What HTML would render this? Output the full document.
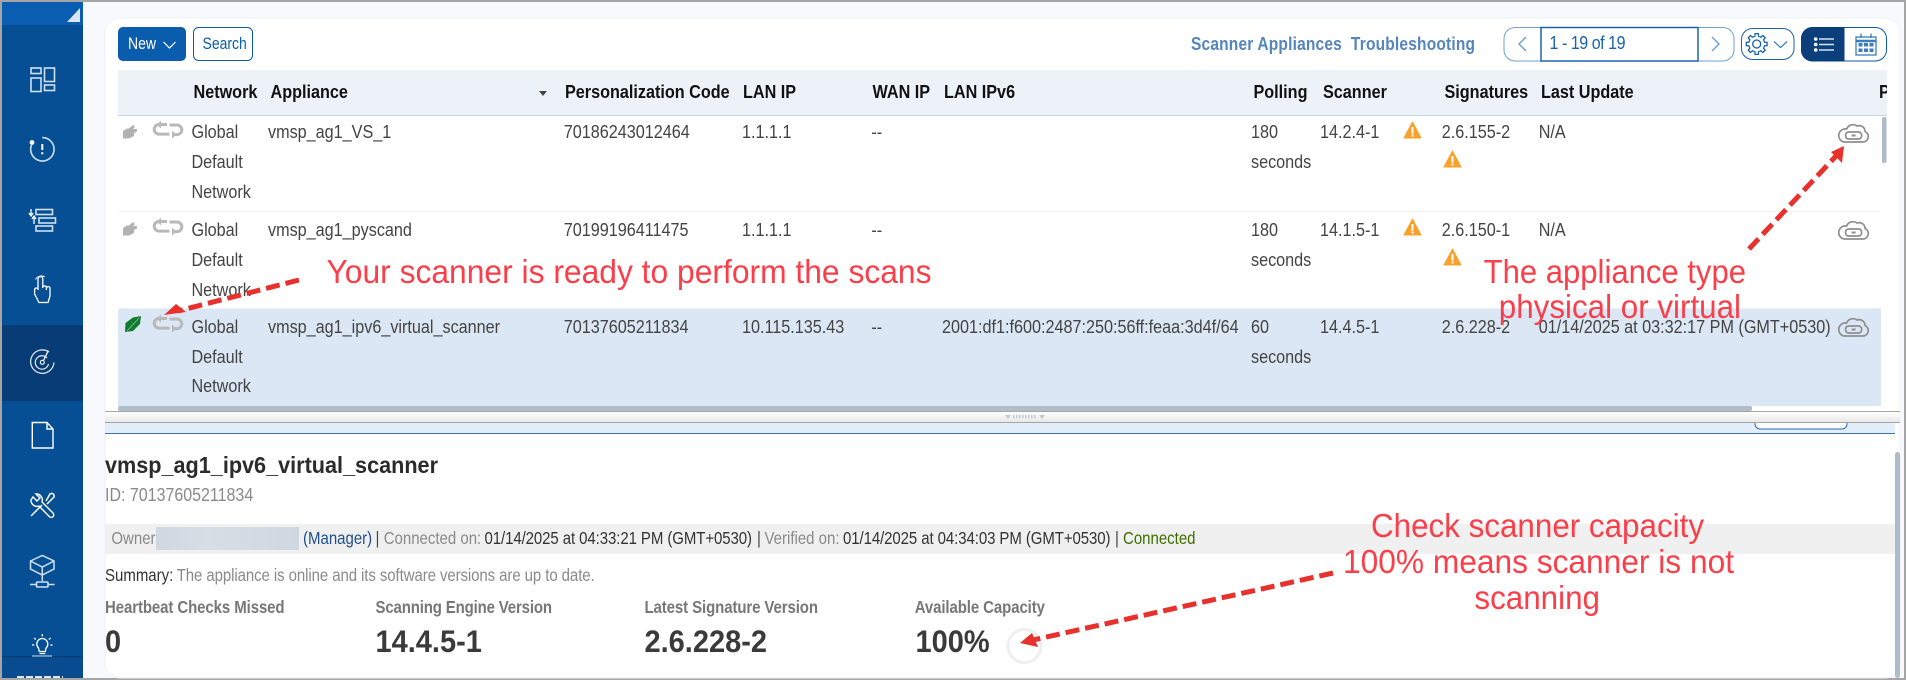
<!DOCTYPE html>
<html>
<head>
<meta charset="utf-8">
<title>Scanner Appliances</title>
<style>
html,body{margin:0;padding:0;background:#fff;width:1906px;height:680px;overflow:hidden}
svg{display:block;position:absolute;left:0;top:0}
text{font-family:"Liberation Sans",Arial,sans-serif;white-space:pre}
</style>
</head>
<body>
<svg width="1906" height="680" viewBox="0 0 1906 680" xmlns="http://www.w3.org/2000/svg">
<defs>
<linearGradient id="spl" x1="0" y1="0" x2="0" y2="1"><stop offset="0" stop-color="#fff"/><stop offset="1" stop-color="#e8e8e8"/></linearGradient>
<linearGradient id="blur" x1="0" y1="0" x2="1" y2="0"><stop offset="0" stop-color="#cfd7e1"/><stop offset=".35" stop-color="#d8dee6"/><stop offset="1" stop-color="#cfd7e1"/></linearGradient>
<clipPath id="hdrclip"><rect x="118" y="70" width="1769" height="46"/></clipPath>
<clipPath id="sideclip"><rect x="2" y="2" width="81" height="654"/></clipPath>
<g id="plug"><path d="M-7 6.5 V-1 L-3 -3.5 L-1 -3.5 L3 -7 L5 -5 L3 -3 L7 -3 L7 -0.5 L4 1 V4 L-1 6.5 Z" fill="#b2b2b2"/></g>
<g id="link" fill="none" stroke="#b9b9b9" stroke-width="3"><path d="M-1 -5.500 H-9 a4.800 4.800 0 0 0 0 9.600 H1.500"/><path d="M1.500 -5 H9 a4.800 4.800 0 0 1 0 9.600 H4"/><path d="M-7 -9.500 V-1.500 L-11 -5.500 Z" fill="#b9b9b9" stroke="none"/><path d="M4 0.500 V8.500 L8.500 4.600 Z" fill="#b9b9b9" stroke="none"/></g>
<g id="warn"><path d="M0 -8 L8.5 8 H-8.5 Z" fill="#f8a22e" stroke="#f8a22e" stroke-width="1" stroke-linejoin="round"/><rect x="-1" y="-3" width="2" height="6.5" fill="#fff"/><rect x="-1" y="4.5" width="2" height="2" fill="#fff"/></g>
<g id="cloud" fill="none" stroke="#8f8f8f" stroke-width="1.700"><path d="M-9 9 H9 a5.500 5.500 0 0 0 2.500 -10.500 a6 6 0 0 0 -8 -5.500 a7 7 0 0 0 -10.500 3 a6.500 6.500 0 0 0 -2.500 13 Z"/><rect x="-8" y="-1" width="16" height="7" rx="3"/><rect x="-2" y="1.500" width="4" height="2" fill="#8f8f8f" stroke="none"/></g>
<path id="tooth" d="M-3.06 -7.39 L-1.8 -7.8 L-1.64 -10.37 L1.64 -10.37 L1.8 -7.8 L3.06 -7.39" fill="none" stroke="#1a62ae" stroke-width="1.3"/>
</defs>

<!-- frame -->
<rect width="1906" height="680" fill="#a5a5a5"/>
<rect x="2" y="2" width="1902" height="676" fill="#f7f9fd"/>

<!-- sidebar -->
<rect x="2" y="2" width="81" height="676" fill="#064f95"/>
<rect x="2" y="2" width="81" height="23" fill="#0a5db0"/>
<path d="M67 22 L80 8 V22 Z" fill="#dbe6f3"/>
<rect x="2" y="325" width="81" height="76" fill="#073c76"/>
<rect x="2" y="656" width="81" height="22" fill="#084b8f"/>
<rect x="2" y="656" width="81" height="1" fill="#063a72"/>
<path d="M17 677 H63" stroke="#dfe7f0" stroke-width="2" stroke-dasharray="7 2"/>
<g fill="none" stroke="#cfe0f1" stroke-width="1.6" clip-path="url(#sideclip)">
  <rect x="31" y="68" width="10" height="5.5"/><rect x="31" y="78" width="10" height="13.5"/><rect x="44.5" y="68" width="10" height="13.5"/><rect x="44.5" y="85" width="10" height="5.5"/>
  <path d="M42.3 137.6 A11.7 11.7 0 1 1 31.5 145"/><circle cx="32" cy="142.5" r="2.4" fill="#fff" stroke="none"/><path d="M42.3 144 V150" stroke="#fff" stroke-width="2"/><circle cx="42.3" cy="153.3" r="1.2" fill="#fff" stroke="none"/>
  <rect x="36" y="209.5" width="16.5" height="5"/><rect x="39" y="218" width="16.5" height="5"/><rect x="36" y="226" width="16.5" height="5"/>
  <path d="M31 209 V215 M29 213 L31 216 L33 213 M34 224 V217 M32 219 L34 216 L36 219" stroke-width="1.3" stroke="#fff"/>
  <path d="M38 290 V279 a2.4 2.4 0 0 1 4.8 0 V288 M42.8 287 a2 2 0 0 1 3.6 0 V290 M46.4 288 a1.8 1.8 0 0 1 3.6 0.6 V296 l-2 6.5 H39 L34.6 294 V289.5 a1.8 1.8 0 0 1 3.4 -0.5" stroke="#fff" stroke-width="1.3"/>
  <path d="M35.5 279.5 a6.7 6.7 0 0 1 9.5 -2.5" stroke="#e6eff8" stroke-width="1"/>
  <path d="M49 352 A11.7 11.7 0 1 0 54 362.5 M47 358 A6.7 6.7 0 1 0 48.5 364" stroke="#e8f0f8" stroke-width="1.2"/><circle cx="42.3" cy="362.3" r="2" stroke="#fff" stroke-width="1.1"/><path d="M43.5 360.5 L48.3 350.7" stroke="#fff" stroke-width="1.2"/>
  <path d="M32.3 422.5 H47 L53 429 V448 H32.3 Z M47 422.5 V429 H53" stroke="#fff" stroke-width="1.4"/>
  <path d="M33 497 L37 501 L40 498 L36 494 a6 6 0 0 1 6 8 L53 513 a2.3 2.3 0 0 1 -3.6 3.6 L39 506 a6 6 0 0 1 -8 -6 Z" stroke="#fff" stroke-width="1.4"/>
  <path d="M31 516 L42 505 M46 501 L50 494 a2.6 2.6 0 0 1 4 3 L47 504" stroke="#fff" stroke-width="1.5"/>
  <path d="M30.5 561 L42.3 555.500 L54 561 V569 L42.3 575 L30.5 569 Z M30.5 561 L42.3 567 L54 561 M42.3 567 V581" stroke-width="1.5"/>
  <rect x="36.5" y="582" width="11.5" height="5" rx="1"/><path d="M30 584.5 H36.5 M48 584.5 H54.5"/>
  <path d="M38.5 648 a5.5 5.5 0 1 1 7.6 0 l-.8 3.5 H39.3 Z M39.5 653.5 H45.3" stroke="#fff" stroke-width="1.3"/>
  <path d="M42.3 634 V636.5 M34 638 L35.8 639.5 M50.6 638 L48.8 639.5 M32 645 H34.3 M50.3 645 H52.6" stroke="#fff" stroke-width="1.2"/>
  <path d="M32 665 V657 H52 V665" stroke="#fff"/>
</g>
<path d="M32 656 H52" stroke="#cfe0f1" stroke-width="1"/>

<!-- card -->
<rect x="105" y="18" width="1795" height="660" rx="15" fill="#fff" stroke="#eef1f5" stroke-width="1"/>

<!-- toolbar -->
<rect x="118" y="27" width="68" height="34" rx="5" fill="#0a5cad"/>
<text transform="matrix(1 0 0 1.18 128 49)" font-size="14" fill="#fff">New</text>
<path d="M163.500 42 L169.500 48 L175.500 42" fill="none" stroke="#fff" stroke-width="1.2"/>
<rect x="193.5" y="27.5" width="59" height="33" rx="5" fill="#fff" stroke="#0a5cad"/>
<text transform="matrix(1 0 0 1.18 202.500 49)" font-size="14" fill="#0a5cad">Search</text>
<text transform="matrix(1 0 0 1.18 1191 50)" font-size="15.5" font-weight="bold" fill="#5585bd" textLength="284" lengthAdjust="spacing">Scanner Appliances  Troubleshooting</text>

<path d="M1541 27.5 H1515 a11 11 0 0 0 -11 11 V50 a11 11 0 0 0 11 11 H1541" fill="#fff" stroke="#6fa0cf"/>
<path d="M1698 27.5 H1723 a11 11 0 0 1 11 11 V50 a11 11 0 0 1 -11 11 H1698" fill="#fff" stroke="#6fa0cf"/>
<rect x="1541" y="27.5" width="157" height="33.500" fill="#fff" stroke="#0a5cad" stroke-width="1.4"/>
<path d="M1526 37 L1519 44 L1526 51" fill="none" stroke="#6f9fcc" stroke-width="1.4"/>
<path d="M1712 37 L1719 44 L1712 51" fill="none" stroke="#6f9fcc" stroke-width="1.4"/>
<text transform="matrix(1 0 0 1.15 1549.500 49)" font-size="16" fill="#1a62ae" textLength="76">1 - 19 of 19</text>

<rect x="1741.500" y="28.5" width="52.500" height="31" rx="11" fill="#fff" stroke="#1a62ae"/>
<g transform="translate(1756.7 44)">
  <use href="#tooth"/><use href="#tooth" transform="rotate(45)"/><use href="#tooth" transform="rotate(90)"/><use href="#tooth" transform="rotate(135)"/><use href="#tooth" transform="rotate(180)"/><use href="#tooth" transform="rotate(225)"/><use href="#tooth" transform="rotate(270)"/><use href="#tooth" transform="rotate(315)"/>
  <circle r="4" fill="none" stroke="#1a62ae" stroke-width="1.3"/>
</g>
<path d="M1774 41.500 L1780.500 47.500 L1787 41.500" fill="none" stroke="#3a7cc0" stroke-width="1.2"/>

<rect x="1801.500" y="27.5" width="85" height="33.500" rx="11" fill="#fff" stroke="#0a5cad"/>
<path d="M1844.500 27 H1812.500 a11.500 11.500 0 0 0 -11.500 11.500 V50 a11.500 11.500 0 0 0 11.500 11.500 H1844.500 Z" fill="#0a3f7c"/>
<g fill="#fff"><circle cx="1815.700" cy="39" r="1.8"/><circle cx="1815.700" cy="44.500" r="1.8"/><circle cx="1815.700" cy="50" r="1.8"/></g>
<path d="M1819 39 H1834 M1819 44.500 H1834 M1819 50 H1834" stroke="#d5e2f0" stroke-width="1.500"/>
<g fill="none" stroke="#3b7dbd" stroke-width="1.300"><rect x="1856" y="37" width="20" height="18"/><path d="M1856 41 H1876" stroke-width="2.500"/><path d="M1861 33.500 V38 M1871 33.500 V38"/></g>
<g fill="#3b7dbd"><rect x="1858.500" y="43" width="4" height="3.500"/><rect x="1864" y="43" width="4" height="3.500"/><rect x="1869.500" y="43" width="4" height="3.500"/><rect x="1858.500" y="48.500" width="4" height="3.500"/><rect x="1864" y="48.500" width="4" height="3.500"/><rect x="1869.500" y="48.500" width="4" height="3.500"/></g>

<!-- table header -->
<rect x="118" y="70" width="1769" height="45" fill="#edf2f9"/>
<rect x="118" y="115" width="1769" height="1" fill="#c5d8ea"/>
<g font-size="16.2" font-weight="bold" fill="#111" clip-path="url(#hdrclip)">
<g>
<text transform="matrix(1 0 0 1.16 193.500 98)">Network</text>
<text transform="matrix(1 0 0 1.16 270.500 98)">Appliance</text>
<text transform="matrix(1 0 0 1.16 565 98)">Personalization Code</text>
<text transform="matrix(1 0 0 1.16 743 98)">LAN IP</text>
<text transform="matrix(1 0 0 1.16 872.500 98)">WAN IP</text>
<text transform="matrix(1 0 0 1.16 944 98)">LAN IPv6</text>
<text transform="matrix(1 0 0 1.16 1253.500 98)">Polling</text>
<text transform="matrix(1 0 0 1.16 1323 98)">Scanner</text>
<text transform="matrix(1 0 0 1.16 1444.500 98)">Signatures</text>
<text transform="matrix(1 0 0 1.16 1541 98)">Last Update</text>
<text transform="matrix(1 0 0 1.16 1879 98)">P</text>
</g>
</g>
<path d="M539 91 H547 L543 96 Z" fill="#444"/>

<!-- row bg / separators -->
<rect x="118" y="211" width="1763" height="1" fill="#f0f2f5"/>
<rect x="118" y="308" width="1763" height="1" fill="#f0f2f5"/>
<rect x="118" y="309" width="1763" height="97" fill="#dbe7f4"/>
<rect x="1882" y="117" width="4.500" height="46" rx="2" fill="#adbcc8"/>

<!-- rows -->
<g font-size="16.2" fill="#444">
<text transform="matrix(1 0 0 1.15 191.500 138)">Global</text>
<text transform="matrix(1 0 0 1.15 191.500 168)">Default</text>
<text transform="matrix(1 0 0 1.15 191.500 198)">Network</text>
<text transform="matrix(1 0 0 1.15 268 138)">vmsp_ag1_VS_1</text>
<text transform="matrix(1 0 0 1.15 563.700 138)">70186243012464</text>
<text transform="matrix(1 0 0 1.15 742 138)">1.1.1.1</text>
<text transform="matrix(1 0 0 1.15 871.400 138)">--</text>
<text transform="matrix(1 0 0 1.15 1251 138)">180</text>
<text transform="matrix(1 0 0 1.15 1251 168)">seconds</text>
<text transform="matrix(1 0 0 1.15 1320 138)">14.2.4-1</text>
<text transform="matrix(1 0 0 1.15 1441.700 138)">2.6.155-2</text>
<text transform="matrix(1 0 0 1.15 1538.700 138)">N/A</text>

<text transform="matrix(1 0 0 1.15 191.500 236)">Global</text>
<text transform="matrix(1 0 0 1.15 191.500 266)">Default</text>
<text transform="matrix(1 0 0 1.15 191.500 296)">Network</text>
<text transform="matrix(1 0 0 1.15 268 236)">vmsp_ag1_pyscand</text>
<text transform="matrix(1 0 0 1.15 563.700 236)">70199196411475</text>
<text transform="matrix(1 0 0 1.15 742 236)">1.1.1.1</text>
<text transform="matrix(1 0 0 1.15 871.400 236)">--</text>
<text transform="matrix(1 0 0 1.15 1251 236)">180</text>
<text transform="matrix(1 0 0 1.15 1251 266)">seconds</text>
<text transform="matrix(1 0 0 1.15 1320 236)">14.1.5-1</text>
<text transform="matrix(1 0 0 1.15 1441.700 236)">2.6.150-1</text>
<text transform="matrix(1 0 0 1.15 1538.700 236)">N/A</text>

<text transform="matrix(1 0 0 1.15 191.500 333)">Global</text>
<text transform="matrix(1 0 0 1.15 191.500 363)">Default</text>
<text transform="matrix(1 0 0 1.15 191.500 392)">Network</text>
<text transform="matrix(1 0 0 1.15 268 333)">vmsp_ag1_ipv6_virtual_scanner</text>
<text transform="matrix(1 0 0 1.15 563.700 333)">70137605211834</text>
<text transform="matrix(1 0 0 1.15 742 333)">10.115.135.43</text>
<text transform="matrix(1 0 0 1.15 871.400 333)">--</text>
<text transform="matrix(1 0 0 1.15 942 333)">2001:df1:f600:2487:250:56ff:feaa:3d4f/64</text>
<text transform="matrix(1 0 0 1.15 1251 333)">60</text>
<text transform="matrix(1 0 0 1.15 1251 363)">seconds</text>
<text transform="matrix(1 0 0 1.15 1320 333)">14.4.5-1</text>
<text transform="matrix(1 0 0 1.15 1441.700 333)">2.6.228-2</text>
<text transform="matrix(1 0 0 1.15 1538.700 333)">01/14/2025 at 03:32:17 PM (GMT+0530)</text>
</g>

<!-- row icons -->
<use href="#plug" x="130" y="132"/><use href="#link" x="168" y="130"/>
<use href="#plug" x="130" y="229"/><use href="#link" x="168" y="227"/>
<path d="M125 332 L125.500 323 L133 317.500 L141 316 L140 324 L133 331 Z" fill="#0f7d2c"/><path d="M127 331 L139 318" stroke="#dbe7f4" stroke-width=".8" opacity=".6"/>
<use href="#link" x="168" y="324"/>
<use href="#warn" x="1412.500" y="130"/><use href="#warn" x="1452.500" y="159"/>
<use href="#warn" x="1412.500" y="227"/><use href="#warn" x="1452.500" y="257"/>
<use href="#cloud" x="1853.600" y="133"/><use href="#cloud" x="1853.600" y="230"/><use href="#cloud" x="1853.600" y="327"/>

<!-- h scrollbar & splitter -->
<rect x="118" y="406" width="1634" height="5" rx="2" fill="#afbec9"/>
<rect x="105" y="411" width="1795" height="1" fill="#a9a59f"/>
<rect x="105" y="412" width="1795" height="10" fill="url(#spl)"/>
<rect x="105" y="422" width="1795" height="1" fill="#a6a6a6"/>
<g fill="#c4c9cf"><path d="M1005 415 H1011 L1008 419 Z M1039 415 H1045 L1042 419 Z"/></g>
<path d="M1013 416.500 H1037" stroke="#c4c9cf" stroke-width="3.500" stroke-dasharray="1.500 1.500"/>
<rect x="105" y="423" width="1790" height="10" fill="#e3eefb"/>
<rect x="105" y="433" width="1790" height="1" fill="#3f74bf"/>
<path d="M1755 423 V424 a5 5 0 0 0 5 5 H1842 a5 5 0 0 0 5 -5 V423" fill="#fff" stroke="#2a68b0"/>

<!-- detail -->
<rect x="1895" y="452" width="5" height="226" rx="2.500" fill="#adbcc8"/>
<text transform="matrix(1 0 0 1.16 105 473)" font-size="20" font-weight="bold" fill="#2b2b2b" textLength="333" lengthAdjust="spacingAndGlyphs">vmsp_ag1_ipv6_virtual_scanner</text>
<text transform="matrix(1 0 0 1.15 105 501)" font-size="16" fill="#8a8a8a">ID: 70137605211834</text>

<rect x="105" y="524" width="1790" height="30" fill="#f0f0f0"/>
<rect x="156" y="527" width="143" height="23" fill="url(#blur)"/>
<g font-size="15">
<text transform="matrix(1 0 0 1.16 111.400 544)" fill="#8a8a8a">Owner</text>
<text transform="matrix(1 0 0 1.16 303 544)" fill="#1f4f8c">(Manager)</text>
<text transform="matrix(1 0 0 1.16 375.500 544)" fill="#444">|</text>
<text transform="matrix(1 0 0 1.16 383.700 544)" fill="#8a8a8a">Connected on:</text>
<text transform="matrix(1 0 0 1.16 484.500 544)" fill="#333" textLength="267.500">01/14/2025 at 04:33:21 PM (GMT+0530)</text>
<text transform="matrix(1 0 0 1.16 757 544)" fill="#444">|</text>
<text transform="matrix(1 0 0 1.16 764.500 544)" fill="#8a8a8a">Verified on:</text>
<text transform="matrix(1 0 0 1.16 843 544)" fill="#333" textLength="267.500">01/14/2025 at 04:34:03 PM (GMT+0530)</text>
<text transform="matrix(1 0 0 1.16 1115 544)" fill="#444">|</text>
<text transform="matrix(1 0 0 1.16 1123 544)" fill="#3f6e00">Connected</text>
<text transform="matrix(1 0 0 1.16 105 581)" fill="#333">Summary:</text>
<text transform="matrix(1 0 0 1.16 176.700 581)" fill="#8a8a8a" textLength="418">The appliance is online and its software versions are up to date.</text>
</g>
<g font-size="15" font-weight="bold" fill="#777">
<text transform="matrix(1 0 0 1.16 105 613)" textLength="179.600">Heartbeat Checks Missed</text>
<text transform="matrix(1 0 0 1.16 375.500 613)" textLength="176.500">Scanning Engine Version</text>
<text transform="matrix(1 0 0 1.16 644.500 613)" textLength="173.500">Latest Signature Version</text>
<text transform="matrix(1 0 0 1.16 914.700 613)" textLength="130.300">Available Capacity</text>
</g>
<g font-size="29" font-weight="bold" fill="#3a3a3a">
<text transform="matrix(1 0 0 1.1 105 652)">0</text>
<text transform="matrix(1 0 0 1.1 375.500 652)">14.4.5-1</text>
<text transform="matrix(1 0 0 1.1 644.500 652)">2.6.228-2</text>
<text transform="matrix(1 0 0 1.1 915.500 652)">100%</text>
</g>
<circle cx="1024.500" cy="646" r="16.500" fill="none" stroke="#efefef" stroke-width="3"/>

<!-- annotation arrows -->
<g fill="none" stroke="#e8302c" stroke-width="5" stroke-dasharray="14 6">
<path d="M299 280 L178 311"/>
<path d="M1749 249 L1836 156"/>
<path d="M1333 573 L1033 640"/>
</g>
<g fill="#e8302c">
<polygon points="164,315 176,304 186,312"/>
<polygon points="1844,146 1831,152 1842,163"/>
<polygon points="1020,643 1032,633 1038,647"/>
</g>

<!-- annotation text -->
<g font-size="29" fill="#fb3f4a">
<text transform="matrix(1 0 0 1.16 326.500 283)" textLength="605" lengthAdjust="spacingAndGlyphs">Your scanner is ready to perform the scans</text>
<text transform="matrix(1 0 0 1.16 1483.600 283)" textLength="262.400" lengthAdjust="spacingAndGlyphs">The appliance type</text>
<text transform="matrix(1 0 0 1.16 1498.800 318)" textLength="242.200" lengthAdjust="spacingAndGlyphs">physical or virtual</text>
<text transform="matrix(1 0 0 1.16 1371 537)" textLength="333" lengthAdjust="spacingAndGlyphs">Check scanner capacity</text>
<text transform="matrix(1 0 0 1.16 1343 573)" textLength="391" lengthAdjust="spacingAndGlyphs">100% means scanner is not</text>
<text transform="matrix(1 0 0 1.16 1474.400 609)" textLength="125.600" lengthAdjust="spacingAndGlyphs">scanning</text>
</g>
</svg>
</body>
</html>
